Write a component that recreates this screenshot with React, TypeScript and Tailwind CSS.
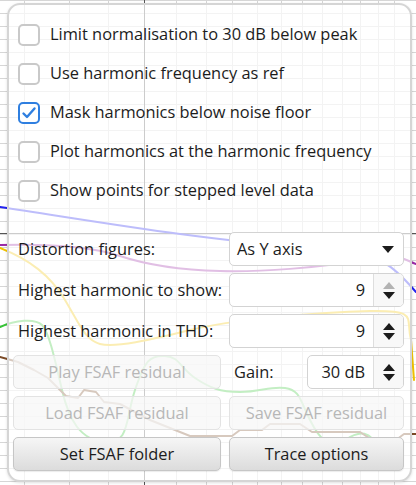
import React from "react";

const vLines = [24, 69, 108, 176, 206, 232, 257, 281, 302, 322, 342, 360, 378, 394];
const hLines = Array.from({ length: 38 }, (_, i) => 13 * i + 0.5);

const Chart = () => (
  <svg className="absolute inset-0" width={416} height={485} viewBox="0 0 416 485">
    <rect width={416} height={485} fill="#ffffff" />
    {hLines.map((y) => (
      <line key={"h" + y} x1={0} x2={416} y1={y} y2={y} stroke="#d6d6d6" strokeWidth={1} />
    ))}
    {vLines.map((x) => (
      <line key={"v" + x} x1={x + 0.5} x2={x + 0.5} y1={0} y2={485} stroke="#d6d6d6" strokeWidth={1} />
    ))}
    <line x1={144.5} x2={144.5} y1={0} y2={485} stroke="#555" strokeWidth={1} />
    <line x1={0} x2={416} y1={233.5} y2={233.5} stroke="#555" strokeWidth={1} />
    <g fill="none" strokeWidth={2} strokeLinecap="round" strokeLinejoin="round">
      <path d="M0,207 C60,216 120,226 180,234 S300,248 340,252 S390,262 416,292" stroke="#2323f0" />
      <path d="M0,245 C40,244 90,246 120,256 S180,270 220,271 S320,268 360,260 S400,258 416,264" stroke="#9a2aa6" />
      <path d="M0,248 C30,260 50,275 65,300 S85,340 100,344 S150,340 190,330 S320,312 370,311 S405,318 411,340 L414,380" stroke="#f2c400" />
      <path d="M0,327 C15,320 35,318 42,325 S55,360 62,390 S80,440 105,442 S125,420 135,390 S150,355 165,356 S180,368 195,378 S220,392 240,392 S270,386 285,388 S300,400 310,420 S330,450 345,440 S370,430 380,450" stroke="#36c536" />
      <path d="M0,357 L18,362 L34,370 L48,378 L58,388 L66,396 L78,398 L84,390 L96,392 L104,402 L120,404 L150,420 L190,436 L232,436 L240,430 L262,430 L270,424 L300,424 L312,432 L360,432 L372,440 L396,440 L404,434 L416,434" stroke="#7b4a26" />
    </g>
  </svg>
);

const CheckBox = ({ checked }: { checked?: boolean }) => (
  <div
    className={
      checked
        ? "w-[22px] h-[22px] shrink-0 rounded-[5px] border-2 border-[#2f7fe0] bg-white flex items-center justify-center"
        : "w-[22px] h-[22px] shrink-0 rounded-[5px] border-2 border-[#c9c9c9] bg-white"
    }
  >
    {checked && (
      <svg width={16} height={16} viewBox="0 0 16 16">
        <path d="M2.5,8.5 L6,12 L13.5,3.5" fill="none" stroke="#2f7fe0" strokeWidth={2.4} strokeLinecap="round" strokeLinejoin="round" />
      </svg>
    )}
  </div>
);

const Tri = ({ up, color }: { up?: boolean; color: string }) => (
  <svg width={12} height={7} viewBox="0 0 12 7">
    <path d={up ? "M0,7 L6,0 L12,7 Z" : "M0,0 L12,0 L6,7 Z"} fill={color} />
  </svg>
);

const Spinner = ({ value, upDisabled, className }: { value: string; upDisabled?: boolean; className?: string }) => (
  <div className={"flex h-full rounded-[5px] border border-[#d3d3d3] bg-white overflow-hidden " + (className || "")}>
    <div className="flex-1 flex items-center justify-end pr-[8px] text-[#1c1c1c]">{value}</div>
    <div className="w-[30px] border-l border-[#dedede] bg-[#f8f8f8] flex flex-col items-center justify-center gap-[3px]">
      <Tri up color={upDisabled ? "#b3b3b3" : "#1c1c1c"} />
      <Tri color="#1c1c1c" />
    </div>
  </div>
);

const rows = [
  { label: "Limit normalisation to 30 dB below peak" },
  { label: "Use harmonic frequency as ref" },
  { label: "Mask harmonics below noise floor", checked: true },
  { label: "Plot harmonics at the harmonic frequency" },
  { label: "Show points for stepped level data" },
];

const disabledBtn =
  "h-full rounded-[5px] border border-[#e3e3e3] bg-[#f6f6f6]/70 text-[#b7b7b7] flex items-center justify-center";
const enabledBtn =
  "h-full rounded-[5px] border border-[#c6c6c6] bg-linear-to-b from-[#f6f6f6] to-[#dcdcdc] text-[#1c1c1c] flex items-center justify-center shadow-[0_1px_1px_rgba(0,0,0,0.08)]";

export default function App() {
  return (
    <div className="relative w-[416px] h-[485px] overflow-hidden bg-white">
      <Chart />
      <div
        className="relative ml-[7px] mt-[3px] w-[405px] rounded-[13px] border-2 border-[#d5d5d5] bg-white/70 shadow-[0_1px_3px_rgba(0,0,0,0.12)] text-[16.4px] text-[#1c1c1c]"
        style={{ fontFamily: '"Open Sans", "Noto Sans", sans-serif' }}
      >
        <div className="pt-[10px] pl-[9px] flex flex-col">
          {rows.map((r) => (
            <div key={r.label} className="h-[39px] flex items-center gap-[10px] whitespace-nowrap">
              <CheckBox checked={r.checked} />
              <span>{r.label}</span>
            </div>
          ))}
        </div>
        <div className="mt-[22px] pl-[4px] pr-[6px] pb-[9px] grid grid-cols-[208px_175px] auto-rows-[34px] gap-x-[8px] gap-y-[7px] whitespace-nowrap">
          <div className="flex items-center pl-[5px]">Distortion figures:</div>
          <div className="flex items-center justify-between rounded-[5px] border border-[#d3d3d3] bg-white pl-[7px] pr-[9px]">
            <span>As Y axis</span>
            <Tri color="#1c1c1c" />
          </div>

          <div className="flex items-center pl-[5px]">Highest harmonic to show:</div>
          <Spinner value="9" upDisabled />

          <div className="flex items-center pl-[5px]">Highest harmonic in THD:</div>
          <Spinner value="9" />

          <div className={disabledBtn}>Play FSAF residual</div>
          <div className="flex items-center justify-between pl-[5px]">
            <span>Gain:</span>
            <Spinner value="30 dB" className="w-[97px]" />
          </div>

          <div className={disabledBtn}>Load FSAF residual</div>
          <div className={disabledBtn}>Save FSAF residual</div>

          <div className={enabledBtn}>Set FSAF folder</div>
          <div className={enabledBtn}>Trace options</div>
        </div>
      </div>
    </div>
  );
}
